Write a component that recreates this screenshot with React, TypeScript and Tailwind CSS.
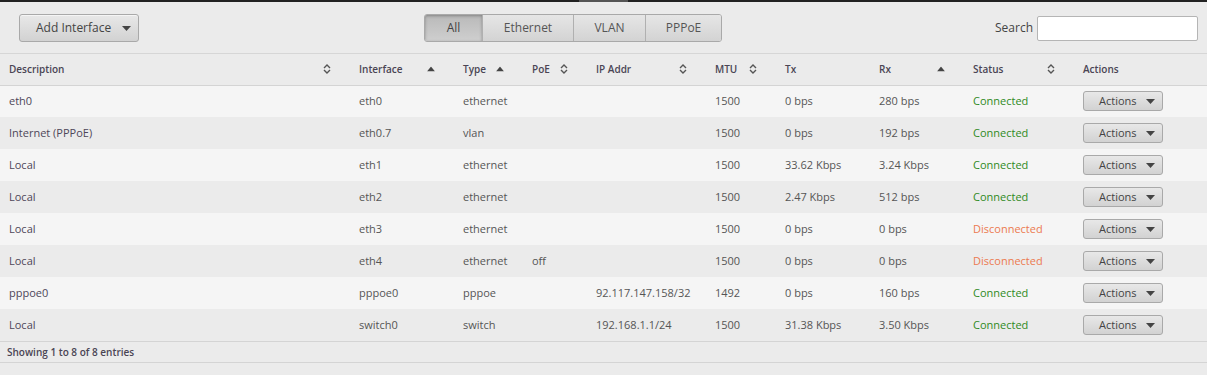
import React from 'react';

interface Row {
  description: string;
  iface: string;
  type: string;
  poe: string;
  ip: string;
  mtu: string;
  tx: string;
  rx: string;
  connected: boolean;
}

const rows: Row[] = [
  { description: 'eth0', iface: 'eth0', type: 'ethernet', poe: '', ip: '', mtu: '1500', tx: '0 bps', rx: '280 bps', connected: true },
  { description: 'Internet (PPPoE)', iface: 'eth0.7', type: 'vlan', poe: '', ip: '', mtu: '1500', tx: '0 bps', rx: '192 bps', connected: true },
  { description: 'Local', iface: 'eth1', type: 'ethernet', poe: '', ip: '', mtu: '1500', tx: '33.62 Kbps', rx: '3.24 Kbps', connected: true },
  { description: 'Local', iface: 'eth2', type: 'ethernet', poe: '', ip: '', mtu: '1500', tx: '2.47 Kbps', rx: '512 bps', connected: true },
  { description: 'Local', iface: 'eth3', type: 'ethernet', poe: '', ip: '', mtu: '1500', tx: '0 bps', rx: '0 bps', connected: false },
  { description: 'Local', iface: 'eth4', type: 'ethernet', poe: 'off', ip: '', mtu: '1500', tx: '0 bps', rx: '0 bps', connected: false },
  { description: 'pppoe0', iface: 'pppoe0', type: 'pppoe', poe: '', ip: '92.117.147.158/32', mtu: '1492', tx: '0 bps', rx: '160 bps', connected: true },
  { description: 'Local', iface: 'switch0', type: 'switch', poe: '', ip: '192.168.1.1/24', mtu: '1500', tx: '31.38 Kbps', rx: '3.50 Kbps', connected: true },
];

// caret used on dropdown buttons
const Caret = () => (
  <svg width="9" height="5" viewBox="0 0 9 5" className="inline-block">
    <path d="M0 0 L9 0 L4.5 5 Z" fill="#444" />
  </svg>
);

const SortBoth = () => (
  <svg width="8" height="10" viewBox="0 0 8 10">
    <path d="M1 4 L4 1 L7 4" stroke="#555" strokeWidth="1.4" fill="none" />
    <path d="M1 6 L4 9 L7 6" stroke="#555" strokeWidth="1.4" fill="none" />
  </svg>
);

const SortUp = () => (
  <svg width="8" height="5" viewBox="0 0 8 5">
    <path d="M0 5 L4 0 L8 5 Z" fill="#444" />
  </svg>
);

type Sort = 'both' | 'up' | 'none';

const columns: { label: string; width: string; sort: Sort }[] = [
  { label: 'Description', width: 'w-[350px]', sort: 'both' },
  { label: 'Interface', width: 'w-[104px]', sort: 'up' },
  { label: 'Type', width: 'w-[69px]', sort: 'up' },
  { label: 'PoE', width: 'w-[64px]', sort: 'both' },
  { label: 'IP Addr', width: 'w-[119px]', sort: 'both' },
  { label: 'MTU', width: 'w-[70px]', sort: 'both' },
  { label: 'Tx', width: 'w-[94px]', sort: 'none' },
  { label: 'Rx', width: 'w-[94px]', sort: 'up' },
  { label: 'Status', width: 'w-[110px]', sort: 'both' },
  { label: 'Actions', width: 'w-[133px]', sort: 'none' },
];

export default function App() {
  return (
    <div className="w-[1207px] h-[375px] overflow-hidden bg-[#ebebeb] text-[11px] text-[#555] font-['Open_Sans',sans-serif]">
      {/* top strip */}
      <div className="h-[2px] bg-[#222] flex">
        <div className="w-[579px]" />
        <div className="w-[49px] bg-[#555]" />
      </div>

      {/* toolbar */}
      <div className="h-[52px] flex items-center pl-[19px] pr-[9px] pt-[1px] border-b border-[#d6d6d6]">
        <div className="w-[405px]">
          <button className="h-[28px] w-[120px] flex items-center pl-[16px] gap-[11px] border border-[#a9a9a9] rounded-[3px] bg-gradient-to-b from-[#e8e8e8] to-[#d2d2d2] text-[12px] text-[#444] shadow-[inset_0_1px_0_#f5f5f5]">
            <span>Add Interface</span>
            <Caret />
          </button>
        </div>
        <div className="flex h-[28px] border border-[#a9a9a9] rounded-[3px] overflow-hidden text-[12px] text-[#555]">
          <div className="w-[57px] flex items-center justify-center bg-gradient-to-b from-[#b9b9b9] to-[#cfcfcf] shadow-[inset_0_1px_3px_rgba(0,0,0,0.3)] text-[#444]">All</div>
          <div className="w-[91px] flex items-center justify-center border-l border-[#b0b0b0] bg-gradient-to-b from-[#e6e6e6] to-[#d3d3d3]">Ethernet</div>
          <div className="w-[72px] flex items-center justify-center border-l border-[#b0b0b0] bg-gradient-to-b from-[#e6e6e6] to-[#d3d3d3]">VLAN</div>
          <div className="w-[76px] flex items-center justify-center border-l border-[#b0b0b0] bg-gradient-to-b from-[#e6e6e6] to-[#d3d3d3]">PPPoE</div>
        </div>
        <div className="flex-1 flex items-center justify-end gap-[4px]">
          <span className="text-[12px] text-[#444]">Search</span>
          <input className="w-[161px] h-[25px] bg-white border border-[#b5b5b5] rounded-[2px]" />
        </div>
      </div>

      <table className="border-collapse table-fixed w-[1207px]">
        <thead>
          <tr className="h-[31px] bg-[#ebebeb] border-b border-[#d4d4d4]">
            {columns.map((c) => (
              <th key={c.label} className={`${c.width} text-left font-semibold text-[10px] text-[#4a4554] pl-[9px] pr-[20px] relative`}>
                {c.label}
                {c.sort !== 'none' && (
                  <span className="absolute right-[19px] top-1/2 -translate-y-1/2 flex">
                    {c.sort === 'both' ? <SortBoth /> : <SortUp />}
                  </span>
                )}
              </th>
            ))}
          </tr>
        </thead>
        <tbody>
          {rows.map((r, i) => (
            <tr key={r.iface} className={`h-[32px] ${i % 2 === 0 ? 'bg-[#f5f5f5]' : 'bg-[#ebebeb]'}`}>
              <td className="pl-[9px] text-[#4e4759]">{r.description}</td>
              <td className="pl-[9px]">{r.iface}</td>
              <td className="pl-[9px]">{r.type}</td>
              <td className="pl-[9px]">{r.poe}</td>
              <td className="pl-[9px]">{r.ip}</td>
              <td className="pl-[9px]">{r.mtu}</td>
              <td className="pl-[9px]">{r.tx}</td>
              <td className="pl-[9px]">{r.rx}</td>
              <td className={`pl-[9px] ${r.connected ? 'text-[#2f8a1e]' : 'text-[#ec7a50]'}`}>
                {r.connected ? 'Connected' : 'Disconnected'}
              </td>
              <td className="pl-[9px]">
                <button className="h-[20px] w-[80px] flex items-center pl-[15px] gap-[9px] border border-[#a9a9a9] rounded-[3px] bg-gradient-to-b from-[#e8e8e8] to-[#d2d2d2] text-[11px] text-[#444]">
                  <span>Actions</span>
                  <Caret />
                </button>
              </td>
            </tr>
          ))}
        </tbody>
      </table>

      <div className="h-[22px] flex items-center pl-[7px] border-t border-b border-[#d4d4d4] font-semibold text-[10px] text-[#4a4554]">
        Showing 1 to 8 of 8 entries
      </div>
    </div>
  );
}
